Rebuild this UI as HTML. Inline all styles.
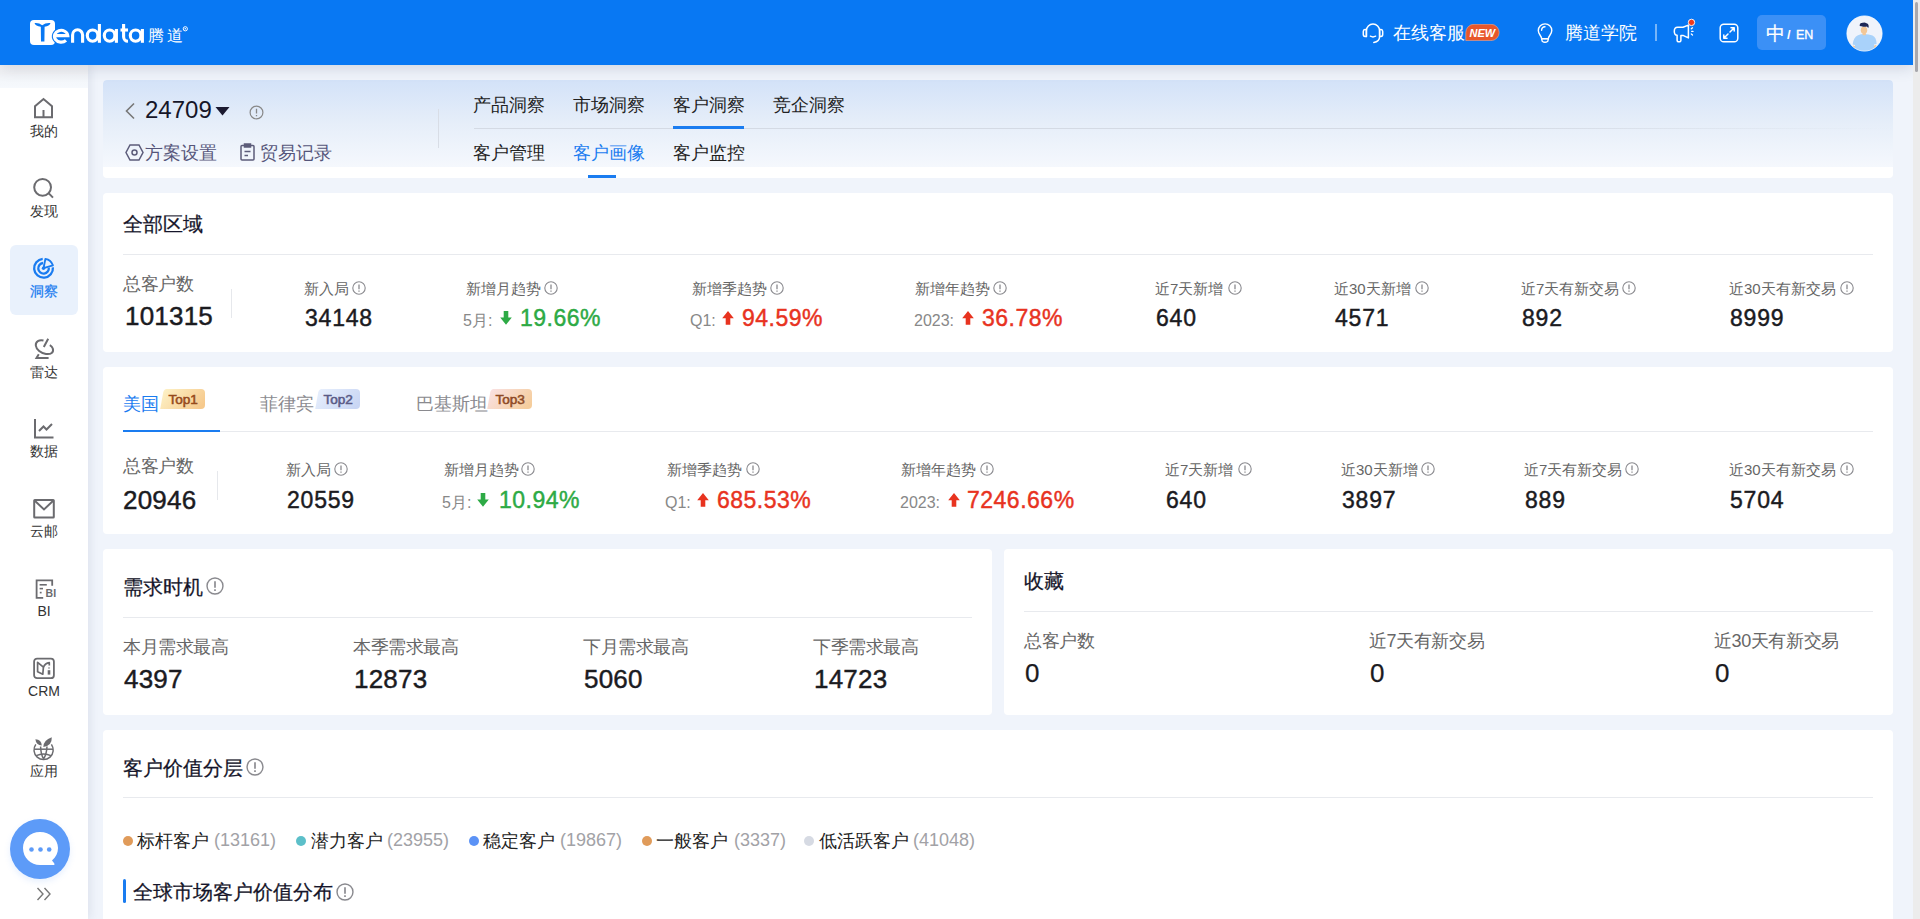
<!DOCTYPE html>
<html><head><meta charset="utf-8">
<style>
*{margin:0;padding:0;box-sizing:border-box}
html,body{width:1920px;height:919px;overflow:hidden;background:#f0f4fb;font-family:"Liberation Sans",sans-serif}
.a{position:absolute;white-space:nowrap;line-height:1}
#hdr{position:absolute;left:0;top:0;width:1913px;height:65px;background:#0878f3;box-shadow:0 3px 14px rgba(40,50,80,.16);z-index:5}
#sb{position:absolute;left:0;top:65px;width:88px;height:854px;background:#fff;box-shadow:3px 0 8px rgba(40,50,90,.08);z-index:4}
#scroll{position:absolute;left:1913px;top:0;width:7px;height:919px;background:#ececec;z-index:6}
#thumb{position:absolute;left:2px;top:2px;width:3px;height:70px;background:#a8a8ad;border-radius:2px}
.card{position:absolute;background:#fff;border-radius:4px}
.w{color:#fff}
.sbt{font-size:14px;color:#333;width:88px;text-align:center;left:0}
.ico{position:absolute}
.title{font-size:20px;color:#15152a;-webkit-text-stroke:0.25px #15152a}
.lbl{font-size:15px;color:#666}
.lbl18{font-size:18px;color:#666;letter-spacing:-0.4px}
.num{font-size:26px;color:#1b1b1f;-webkit-text-stroke:0.45px #1b1b1f;letter-spacing:0.2px}
.num24{font-size:23px;color:#1b1b1f;-webkit-text-stroke:0.45px #1b1b1f;letter-spacing:0.8px}
.hr{position:absolute;height:1px;background:#e8eaee}
.pre{font-size:16px;color:#888}
.grn{font-size:23px;color:#2daa45;-webkit-text-stroke:0.45px #2daa45;letter-spacing:0.5px}
.red{font-size:23px;color:#e8331f;-webkit-text-stroke:0.45px #e8331f;letter-spacing:0.5px}
</style></head><body>

<!-- HEADER -->
<div id="hdr">
  <svg class="ico" style="left:0;top:0" width="200" height="65" viewBox="0 0 200 65">
  <rect x="30" y="20" width="25" height="25" rx="4" fill="#fff"/>
  <path d="M34.5 23 Q39 22.5 42.2 25.2 Q45.6 22.5 50.5 23 Q49.5 26.2 44.6 26.8 L44.4 41.5 L41 41.5 L40.8 26.8 Q35.5 26.2 34.5 23Z" fill="#0878f3"/>
  <g fill="none" stroke="#fff" stroke-width="3.1" stroke-linecap="butt">
    <path d="M54.4 35.6 H67.8 A6.7 5.9 0 1 0 66 40.3" stroke="#0878f3" stroke-width="5.2"/><path d="M54.4 35.6 H67.8 A6.7 5.9 0 1 0 66 40.3"/>
    <path d="M72.6 42.8 V35 A5 5.2 0 0 1 82.6 35 V42.8"/>
    <ellipse cx="92.6" cy="35.6" rx="5.3" ry="5.6"/>
    <path d="M99.4 24 V42.8"/>
    <ellipse cx="109.6" cy="35.6" rx="5.3" ry="5.6"/>
    <path d="M116.4 29 V42.8"/>
    <path d="M123.6 24 V37 A4.5 4.5 0 0 0 128 41.3"/>
    <path d="M120.5 30 H128"/>
    <ellipse cx="135.6" cy="35.6" rx="5.3" ry="5.6"/>
    <path d="M142.4 29 V42.8"/>
  </g>
  <text x="147.5" y="41" font-family="Liberation Sans" font-size="15.5" fill="#fff">腾</text>
  <text x="166.5" y="41" font-family="Liberation Sans" font-size="15.5" fill="#fff">道</text>
  <circle cx="185.3" cy="28.8" r="2.1" fill="none" stroke="#fff" stroke-width="1"/><circle cx="185.3" cy="28.8" r=".8" fill="#fff"/>
</svg>

  <svg class="ico" style="left:1362px;top:23px" width="22" height="21" viewBox="0 0 22 21" fill="none" stroke="#fff" stroke-width="1.5" stroke-linecap="round"><path d="M4.4 13.4 V7.6 A6.6 6.6 0 0 1 17.6 7.6 V13.5 Q17.6 18.6 11.8 19.4"/><path d="M4.4 6.6 H3 Q1.3 6.8 1.3 8.6 V11.6 Q1.3 13.4 3 13.4 H4.4Z" stroke-linejoin="round"/><path d="M17.6 6.6 H19 Q20.7 6.8 20.7 8.6 V11.6 Q20.7 13.4 19 13.4 H17.6Z" stroke-linejoin="round"/><path d="M8.4 13.2 Q11 14.6 13.6 13.2"/></svg>
  <div class="a w" style="left:1393px;top:24px;font-size:18px">在线客服</div>
  <svg class="ico" style="left:1465px;top:24px" width="35" height="17" viewBox="0 0 35 17"><path d="M0.8 16.6 V8.5 A8.2 8.2 0 0 1 9 0.3 H26 A8.15 8.15 0 0 1 26 16.6 Z" fill="#e8572a" stroke="#f4a98f" stroke-width=".6"/><text x="17.3" y="12.6" font-family="Liberation Sans" font-weight="bold" font-style="italic" font-size="11" fill="#fff" text-anchor="middle">NEW</text></svg>
  <svg class="ico" style="left:1536px;top:23px" width="18" height="21" viewBox="0 0 18 21" fill="none" stroke="#fff" stroke-width="1.4" stroke-linejoin="round"><path d="M5.6 15.6 C5.6 12.8 2.3 11.4 2.3 7.6 A6.75 6.75 0 0 1 15.8 7.6 C15.8 11.4 12.4 12.8 12.4 15.6 Z"/><path d="M5.6 15.8 H12.4 L11.8 18.2 Q9 20.4 6.2 18.2Z"/><path d="M5.6 7.2 A3.6 3.6 0 0 1 9 3.7" stroke-linecap="round"/></svg>
  <div class="a w" style="left:1565px;top:24px;font-size:18px">腾道学院</div>
  <div class="a" style="left:1655px;top:24px;width:2px;height:17px;background:rgba(255,255,255,.45)"></div>
  <svg class="ico" style="left:1672px;top:16px" width="26" height="28" viewBox="0 -2 26 28" fill="none" stroke="#fff" stroke-width="1.5" stroke-linejoin="round"><path d="M2.3 13.2 Q2.3 9.2 5.6 9.2 H11 L16.4 7.1 V19.9 L11 17.4 H8.9 V22.2 Q8.9 23.8 7 23.8 Q5.1 23.8 5.1 22.2 V17.3 Q2.3 17.1 2.3 13.2Z"/><path d="M19.3 10.8 L20.5 9.8 M19.7 13.4 H21 M19.3 16 L20.5 17" stroke-width="1.3" stroke-linecap="round"/><circle cx="19.5" cy="4.4" r="3.2" fill="#f03a1c" stroke="#fff" stroke-width="0.9"/></svg>
  <svg class="ico" style="left:1719px;top:23px" width="20" height="20" viewBox="0 0 20 20" fill="none" stroke="#fff" stroke-width="1.5" stroke-linecap="round" stroke-linejoin="round"><rect x="1.2" y="1.2" width="17.6" height="17.6" rx="3.6"/><path d="M11 9 L15 5 M12 4.8 H15.2 V8 M9 11 L5 15 M4.8 12 V15.2 H8"/></svg>
  <div class="a" style="left:1757px;top:15px;width:69px;height:35px;background:#3b90f6;border-radius:5px"></div>
  <div class="a w" style="left:1766px;top:23.5px;font-size:19px;-webkit-text-stroke:0.2px #fff">中</div>
  <div class="a w" style="left:1787px;top:28px;font-size:13px;font-weight:bold">/</div><div class="a w" style="left:1796px;top:28.5px;font-size:12.5px;-webkit-text-stroke:0.35px #fff">EN</div>
  <svg class="ico" style="left:1846px;top:15px" width="37" height="37" viewBox="0 0 37 37"><circle cx="18.5" cy="18.5" r="17.6" fill="#eff3fb" stroke="#ffffff" stroke-width="0.8"/><clipPath id="cav"><circle cx="18.5" cy="18.5" r="17.2"/></clipPath><g clip-path="url(#cav)"><ellipse cx="7.6" cy="33.2" rx="2" ry="2.6" fill="#f3c796"/><ellipse cx="29.4" cy="32.6" rx="2" ry="2.6" fill="#f3c796"/><path d="M8.6 37 L9 30 L6.6 29.5 Q7.5 22 12 20.2 Q15 19 18 19 Q23 19 26.5 20.6 Q30.5 22.5 30.6 29 L28 29.6 L28.2 37Z" fill="#a9d2fa"/><rect x="16.6" y="16" width="3.2" height="4.2" fill="#f3c796"/><ellipse cx="18" cy="15.2" rx="3.2" ry="3.6" fill="#f3c796"/><path d="M13.5 10.2 Q14 7.6 17 7.8 Q18.5 7 20.5 8.2 Q23.2 9 22.6 12.6 Q21.6 13 21 11.6 Q18 12.2 15.5 11.2 Q14 11.6 13.5 10.2Z" fill="#1c2757"/></g></svg>
</div>
<div id="scroll"><div id="thumb"></div></div>

<!-- SIDEBAR -->
<div id="sb"></div><div style="position:absolute;left:0;top:65px;width:88px;height:23px;background:linear-gradient(180deg,#f3f4f6 0%,#f2f3f6 35%,#f3f6fa 60%,#f6f9fd 100%);z-index:4"></div>
<div style="position:absolute;left:0;top:0;z-index:7">
  <!-- 我的 -->
  <svg class="ico" style="left:33px;top:97px" width="22" height="22" viewBox="0 0 22 22" fill="none" stroke="#6b6b6f" stroke-width="2"><path d="M2 20.3 V9.2 L10.5 2 L19 9.2 V20.3 Z"/><path d="M10.5 13 V20.3"/></svg>
  <div class="a sbt" style="top:124px">我的</div>
  <!-- 发现 -->
  <svg class="ico" style="left:33px;top:177px" width="22" height="23" viewBox="0 0 22 23" fill="none" stroke="#6b6b6f" stroke-width="2"><circle cx="9.6" cy="10.3" r="8.4"/><path d="M15.8 16.4 L20 20.6"/></svg>
  <div class="a sbt" style="top:204px">发现</div>
  <!-- 洞察 active -->
  <div class="a" style="left:10px;top:245px;width:68px;height:70px;background:#e9f1fc;border-radius:6px"></div>
  <svg class="ico" style="left:32px;top:257px" width="23" height="23" viewBox="0 0 23 23" fill="none" stroke="#1a7cf0" stroke-width="2.3"><path d="M10.7 1.9 A9.4 9.4 0 1 0 20.9 10.4"/><path d="M11 6 A5.3 5.3 0 1 0 16.8 10.6"/><path d="M11.5 11.2 L13.4 1.9 A9.6 9.6 0 0 1 20.9 8.4 Z" stroke-width="1.9" stroke-linejoin="round"/><circle cx="11.5" cy="11.2" r="1.7" fill="#1a7cf0" stroke="none"/></svg>
  <div class="a sbt" style="top:284px;color:#1a7cf0;-webkit-text-stroke:0.25px #1a7cf0">洞察</div>
  <!-- 雷达 -->
  <svg class="ico" style="left:33px;top:337px" width="22" height="23" viewBox="0 0 22 23" fill="none" stroke="#6b6b6f" stroke-width="2"><path d="M10.5 3.6 C6 2.6 2.5 4.5 2.8 8.5 C3.2 12.5 8 16.5 13 17 C18 17.6 21 15.5 19.8 11.5 C19.3 10 18 8.8 16.8 8.2"/><path d="M15.2 1.8 L10.8 10"/><path d="M5.8 17.3 L3.5 21 H15.6"/></svg>
  <div class="a sbt" style="top:365px">雷达</div>
  <!-- 数据 -->
  <svg class="ico" style="left:33px;top:418px" width="22" height="21" viewBox="0 0 22 21" fill="none" stroke="#6b6b6f" stroke-width="2"><path d="M2 1 V19.5 H20.5"/><path d="M6 13 L10.5 8.5 L13.5 11.5 L19 6"/></svg>
  <div class="a sbt" style="top:444px">数据</div>
  <!-- 云邮 -->
  <svg class="ico" style="left:33px;top:498px" width="22" height="22" viewBox="0 0 22 22" fill="none" stroke="#6b6b6f" stroke-width="2"><rect x="1.2" y="2" width="19.6" height="17.6" rx="0.6"/><path d="M1.8 2.8 L11 11.4 L20.2 2.8"/></svg>
  <div class="a sbt" style="top:524px">云邮</div>
  <!-- BI -->
  <svg class="ico" style="left:33px;top:578px" width="24" height="22" viewBox="0 0 24 22" fill="none" stroke="#6b6b6f" stroke-width="1.8"><path d="M10.2 19.8 H3.6 V2.4 H19.2 V7.8"/><path d="M6.6 6.8 H13.8" stroke-width="1.6"/><path d="M6.6 10.6 H10" stroke-width="1.6"/><path d="M6.8 14.6 H8.6" stroke-width="1.6"/><text x="12.6" y="19.3" font-family="Liberation Sans" font-weight="bold" font-size="10.5" fill="#6b6b6f" stroke="none">BI</text></svg>
  <div class="a sbt" style="top:604px">BI</div>
  <!-- CRM -->
  <svg class="ico" style="left:33px;top:657px" width="23" height="23" viewBox="0 0 23 23" fill="none" stroke="#6b6b6f" stroke-width="1.8" stroke-linejoin="round"><rect x="1.1" y="1.6" width="19.8" height="19.6" rx="3"/><path d="M4.6 5.3 V14.8 L9.8 17.2 L10.4 10.2 Z" stroke-width="1.7"/><path d="M10.4 10.2 Q12.2 6.2 16.3 5.6 V8.4" stroke-width="1.7"/><path d="M15 10.6 H17 L16 12.2Z" fill="#6b6b6f" stroke="none"/><rect x="14.7" y="13.2" width="2.6" height="4.4" fill="#6b6b6f" stroke="none"/></svg>
  <div class="a sbt" style="top:684px">CRM</div>
  <!-- 应用 -->
  <svg class="ico" style="left:32px;top:736px" width="24" height="25" viewBox="0 0 24 25" fill="none" stroke="#6b6b6f" stroke-width="1.5"><path d="M3.8 8.4 A9.6 9.6 0 1 0 19.4 8.4"/><path d="M2 13.2 H21.2"/><path d="M4.2 19.6 Q11.6 16.2 19 19.6"/><path d="M8.6 10.5 Q8.8 18.5 11.6 22.8 M15 10.5 Q14.6 18.5 11.6 22.8"/><path d="M3.4 3.2 Q9.5 3.6 9.8 9.4 Q4 9.2 3.4 3.2Z" fill="#6b6b6f" stroke="none"/><path d="M19.8 1.2 Q20.2 9.6 11.3 11 Q11.4 4 19.8 1.2Z" fill="#6b6b6f" stroke="none"/></svg>
  <div class="a sbt" style="top:764px">应用</div>
  <!-- chat -->
  <div class="a" style="left:10px;top:819px;width:60px;height:60px;border-radius:50%;background:#5d9bf8;box-shadow:0 3px 6px rgba(93,155,248,.15)"></div>
  <svg class="ico" style="left:22px;top:831px" width="37" height="36" viewBox="0 0 37 36"><path d="M18 1 C8 1 1 8 1 17 C1 27 9 34 18 34 H31 Q33.5 34 32 32 L30 29.5 C34 26 36 22 36 17 C36 8 28 1 18 1Z" fill="#fff"/><circle cx="9.5" cy="18.5" r="2.3" fill="#5d9bf8"/><circle cx="18.5" cy="18.5" r="2.3" fill="#5d9bf8"/><circle cx="27.2" cy="18.5" r="2.3" fill="#5d9bf8"/></svg>
  <svg class="ico" style="left:36px;top:887px" width="16" height="14" viewBox="0 0 16 14" fill="none" stroke="#777" stroke-width="1.4"><path d="M1.5 1 L7 7 L1.5 13 M8.5 1 L14 7 L8.5 13"/></svg>
</div>

<!-- CARD 1 nav -->
<div class="card" style="left:103px;top:80px;width:1790px;height:98px;overflow:hidden">
  <div style="position:absolute;left:0;top:0;width:100%;height:87px;background:linear-gradient(180deg,#d3e2f8 0%,#e6eef9 50%,#f5f8fd 100%)"></div>
</div>
<svg class="ico" style="left:124px;top:102px" width="12" height="18" viewBox="0 0 12 18" fill="none" stroke="#777" stroke-width="1.6"><path d="M10 1.5 L2.5 9 L10 16.5"/></svg>
<div class="a" style="left:145px;top:98px;font-size:24px;color:#161628">24709</div>
<svg class="ico" style="left:215px;top:106px" width="15" height="10" viewBox="0 0 15 10"><path d="M0.5 1 H14.5 L7.5 9.5Z" fill="#1c1a30"/></svg>
<svg class="ico" style="left:249px;top:105px" width="15" height="15" viewBox="0 0 15 15" fill="none" stroke="#888" stroke-width="1.2"><circle cx="7.5" cy="7.5" r="6.4"/><path d="M7.5 3.8 V8.5 M7.5 10 V11.2" stroke-width="1.3"/></svg>
<svg class="ico" style="left:125px;top:144px" width="19" height="17" viewBox="0 0 19 17" fill="none" stroke="#5c5c7a" stroke-width="1.5"><path d="M5 1 H14 L18 8.5 L14 16 H5 L1 8.5Z"/><circle cx="9.5" cy="8.5" r="2.5"/></svg>
<div class="a" style="left:145px;top:144px;font-size:18px;color:#55557a">方案设置</div>
<svg class="ico" style="left:240px;top:143px" width="15" height="18" viewBox="0 0 15 18" fill="none" stroke="#5c5c7a" stroke-width="1.5"><rect x="1" y="2.5" width="13" height="14.5" rx="1"/><rect x="4.5" y="1" width="6" height="3" fill="#5c5c7a"/><path d="M4.5 8.5 H10.5 M4.5 12.5 H8"/></svg>
<div class="a" style="left:260px;top:144px;font-size:18px;color:#55557a">贸易记录</div>
<div class="a" style="left:438px;top:109px;width:1px;height:39px;background:#d8dde6"></div>
<div class="a" style="left:473px;top:96px;font-size:18px;color:#222">产品洞察</div>
<div class="a" style="left:573px;top:96px;font-size:18px;color:#222">市场洞察</div>
<div class="a" style="left:673px;top:96px;font-size:18px;color:#222">客户洞察</div>
<div class="a" style="left:773px;top:96px;font-size:18px;color:#222">竞企洞察</div>
<div class="a" style="left:474px;top:128px;width:1419px;height:1px;background:linear-gradient(90deg,#d4dae4 0%,#d4dae4 72%,rgba(212,218,228,0) 100%)"></div>
<div class="a" style="left:673px;top:126px;width:71px;height:3px;background:#1a7cf0"></div>
<div class="a" style="left:473px;top:144px;font-size:18px;color:#222">客户管理</div>
<div class="a" style="left:573px;top:144px;font-size:18px;color:#1a7cf0">客户画像</div>
<div class="a" style="left:673px;top:144px;font-size:18px;color:#222">客户监控</div>
<div class="a" style="left:588px;top:175px;width:28px;height:3px;background:#1a7cf0"></div>

<!-- CARD 2 全部区域 -->
<div class="card" style="left:103px;top:193px;width:1790px;height:159px"></div>
<div class="a title" style="left:123px;top:214px">全部区域</div>
<div class="hr" style="left:123px;top:254px;width:1750px"></div>

<!-- CARD 3 country -->
<div class="card" style="left:103px;top:367px;width:1790px;height:167px"></div>

<!-- CARD 4 需求时机 -->
<div class="card" style="left:103px;top:549px;width:889px;height:166px"></div>
<div class="a title" style="left:123px;top:577px">需求时机</div>
<div class="hr" style="left:123px;top:617px;width:849px"></div>

<!-- CARD 5 收藏 -->
<div class="card" style="left:1004px;top:549px;width:889px;height:166px"></div>
<div class="a title" style="left:1024px;top:571px">收藏</div>
<div class="hr" style="left:1024px;top:611px;width:849px"></div>

<!-- CARD 6 -->
<div class="card" style="left:103px;top:730px;width:1790px;height:200px"></div>
<div class="a title" style="left:123px;top:758px">客户价值分层</div>
<div class="hr" style="left:123px;top:797px;width:1750px"></div>

<!--CONTENT-->
<div class="a lbl18" style="left:123px;top:275px;">总客户数</div>
<div class="a num" style="left:125px;top:303px;">101315</div>
<div class="a" style="left:231px;top:289px;width:1px;height:29px;background:#e6e8ec"></div>
<div class="a lbl" style="left:304px;top:281px;">新入局</div>
<svg class="ico" style="left:352px;top:280.5px" width="14" height="14" viewBox="0 0 14 14" fill="none" stroke="#8a8a8f" stroke-width="1.1"><circle cx="7" cy="7" r="6.2"/><path d="M7 3.4 V8.3 M7 9.6 V10.8" stroke-width="1.3"/></svg>
<div class="a num24" style="left:305px;top:307px;">34148</div>
<div class="a lbl" style="left:466px;top:281px;">新增月趋势</div>
<svg class="ico" style="left:544px;top:280.5px" width="14" height="14" viewBox="0 0 14 14" fill="none" stroke="#8a8a8f" stroke-width="1.1"><circle cx="7" cy="7" r="6.2"/><path d="M7 3.4 V8.3 M7 9.6 V10.8" stroke-width="1.3"/></svg>
<div class="a pre" style="left:463px;top:313px;">5月:</div>
<svg class="ico" style="left:500px;top:311px" width="12" height="14" viewBox="0 0 12 14"><path d="M6 13.8 L11.8 6.6 H8.3 V0 H3.7 V6.6 H0.2Z" fill="#2daa45"/></svg>
<div class="a grn" style="left:520px;top:307px;">19.66%</div>
<div class="a lbl" style="left:692px;top:281px;">新增季趋势</div>
<svg class="ico" style="left:770px;top:280.5px" width="14" height="14" viewBox="0 0 14 14" fill="none" stroke="#8a8a8f" stroke-width="1.1"><circle cx="7" cy="7" r="6.2"/><path d="M7 3.4 V8.3 M7 9.6 V10.8" stroke-width="1.3"/></svg>
<div class="a pre" style="left:690px;top:313px;">Q1:</div>
<svg class="ico" style="left:722px;top:311px" width="12" height="14" viewBox="0 0 12 14"><path d="M6 0 L11.8 7.2 H8.3 V13.8 H3.7 V7.2 H0.2Z" fill="#e8331f"/></svg>
<div class="a red" style="left:742px;top:307px;">94.59%</div>
<div class="a lbl" style="left:915px;top:281px;">新增年趋势</div>
<svg class="ico" style="left:993px;top:280.5px" width="14" height="14" viewBox="0 0 14 14" fill="none" stroke="#8a8a8f" stroke-width="1.1"><circle cx="7" cy="7" r="6.2"/><path d="M7 3.4 V8.3 M7 9.6 V10.8" stroke-width="1.3"/></svg>
<div class="a pre" style="left:914px;top:313px;">2023:</div>
<svg class="ico" style="left:962px;top:311px" width="12" height="14" viewBox="0 0 12 14"><path d="M6 0 L11.8 7.2 H8.3 V13.8 H3.7 V7.2 H0.2Z" fill="#e8331f"/></svg>
<div class="a red" style="left:982px;top:307px;">36.78%</div>
<div class="a lbl" style="left:1155px;top:281px;">近7天新增</div>
<svg class="ico" style="left:1228px;top:280.5px" width="14" height="14" viewBox="0 0 14 14" fill="none" stroke="#8a8a8f" stroke-width="1.1"><circle cx="7" cy="7" r="6.2"/><path d="M7 3.4 V8.3 M7 9.6 V10.8" stroke-width="1.3"/></svg>
<div class="a num24" style="left:1156px;top:307px;">640</div>
<div class="a lbl" style="left:1334px;top:281px;">近30天新增</div>
<svg class="ico" style="left:1415px;top:280.5px" width="14" height="14" viewBox="0 0 14 14" fill="none" stroke="#8a8a8f" stroke-width="1.1"><circle cx="7" cy="7" r="6.2"/><path d="M7 3.4 V8.3 M7 9.6 V10.8" stroke-width="1.3"/></svg>
<div class="a num24" style="left:1335px;top:307px;">4571</div>
<div class="a lbl" style="left:1521px;top:281px;">近7天有新交易</div>
<svg class="ico" style="left:1622px;top:280.5px" width="14" height="14" viewBox="0 0 14 14" fill="none" stroke="#8a8a8f" stroke-width="1.1"><circle cx="7" cy="7" r="6.2"/><path d="M7 3.4 V8.3 M7 9.6 V10.8" stroke-width="1.3"/></svg>
<div class="a num24" style="left:1522px;top:307px;">892</div>
<div class="a lbl" style="left:1729px;top:281px;">近30天有新交易</div>
<svg class="ico" style="left:1840px;top:280.5px" width="14" height="14" viewBox="0 0 14 14" fill="none" stroke="#8a8a8f" stroke-width="1.1"><circle cx="7" cy="7" r="6.2"/><path d="M7 3.4 V8.3 M7 9.6 V10.8" stroke-width="1.3"/></svg>
<div class="a num24" style="left:1730px;top:307px;">8999</div>
<div class="a " style="left:123px;top:395px;font-size:18px;color:#1a7cf0">美国</div>
<div class="a " style="left:260px;top:395px;font-size:18px;color:#8a8a8f">菲律宾</div>
<div class="a " style="left:416px;top:395px;font-size:18px;color:#8a8a8f">巴基斯坦</div>
<svg class="ico" style="left:160px;top:388px" width="46" height="22" viewBox="0 0 46 22"><defs><linearGradient id="gTop1" x1="0" x2="1" y1="0.3" y2="0.7"><stop offset="0" stop-color="#fdf0c4"/><stop offset="1" stop-color="#f6c98c"/></linearGradient></defs><path d="M6.5 1 H41 a4 4 0 0 1 4 4 V17 a4 4 0 0 1 -4 4 H0.2 L3.2 4.5 Q4 1 6.5 1Z" fill="url(#gTop1)"/><text x="23.2" y="15.7" font-family="Liberation Sans" font-size="13.6" fill="#964a1c" stroke="#964a1c" stroke-width="0.55" text-anchor="middle">Top1</text></svg>
<svg class="ico" style="left:315px;top:388px" width="46" height="22" viewBox="0 0 46 22"><defs><linearGradient id="gTop2" x1="0" x2="1" y1="0.3" y2="0.7"><stop offset="0" stop-color="#e6eefc"/><stop offset="1" stop-color="#c9d6f4"/></linearGradient></defs><path d="M6.5 1 H41 a4 4 0 0 1 4 4 V17 a4 4 0 0 1 -4 4 H0.2 L3.2 4.5 Q4 1 6.5 1Z" fill="url(#gTop2)"/><text x="23.2" y="15.7" font-family="Liberation Sans" font-size="13.6" fill="#5a5a86" stroke="#5a5a86" stroke-width="0.55" text-anchor="middle">Top2</text></svg>
<svg class="ico" style="left:487px;top:388px" width="46" height="22" viewBox="0 0 46 22"><defs><linearGradient id="gTop3" x1="0" x2="1" y1="0.3" y2="0.7"><stop offset="0" stop-color="#f9e0e0"/><stop offset="1" stop-color="#f5cd9c"/></linearGradient></defs><path d="M6.5 1 H41 a4 4 0 0 1 4 4 V17 a4 4 0 0 1 -4 4 H0.2 L3.2 4.5 Q4 1 6.5 1Z" fill="url(#gTop3)"/><text x="23.2" y="15.7" font-family="Liberation Sans" font-size="13.6" fill="#8e4a26" stroke="#8e4a26" stroke-width="0.55" text-anchor="middle">Top3</text></svg>
<div class="a" style="left:123px;top:431px;width:1750px;height:1px;background:#e8eaee"></div>
<div class="a" style="left:123px;top:430px;width:97px;height:2px;background:#1a7cf0"></div>
<div class="a lbl18" style="left:123px;top:457px;">总客户数</div>
<div class="a num" style="left:123px;top:487px;">20946</div>
<div class="a" style="left:217px;top:471px;width:1px;height:29px;background:#e6e8ec"></div>
<div class="a lbl" style="left:286px;top:462px;">新入局</div>
<svg class="ico" style="left:334px;top:461.5px" width="14" height="14" viewBox="0 0 14 14" fill="none" stroke="#8a8a8f" stroke-width="1.1"><circle cx="7" cy="7" r="6.2"/><path d="M7 3.4 V8.3 M7 9.6 V10.8" stroke-width="1.3"/></svg>
<div class="a num24" style="left:287px;top:489px;">20559</div>
<div class="a lbl" style="left:444px;top:462px;">新增月趋势</div>
<svg class="ico" style="left:521px;top:461.5px" width="14" height="14" viewBox="0 0 14 14" fill="none" stroke="#8a8a8f" stroke-width="1.1"><circle cx="7" cy="7" r="6.2"/><path d="M7 3.4 V8.3 M7 9.6 V10.8" stroke-width="1.3"/></svg>
<div class="a pre" style="left:442px;top:495px;">5月:</div>
<svg class="ico" style="left:477px;top:493px" width="12" height="14" viewBox="0 0 12 14"><path d="M6 13.8 L11.8 6.6 H8.3 V0 H3.7 V6.6 H0.2Z" fill="#2daa45"/></svg>
<div class="a grn" style="left:499px;top:489px;">10.94%</div>
<div class="a lbl" style="left:667px;top:462px;">新增季趋势</div>
<svg class="ico" style="left:746px;top:461.5px" width="14" height="14" viewBox="0 0 14 14" fill="none" stroke="#8a8a8f" stroke-width="1.1"><circle cx="7" cy="7" r="6.2"/><path d="M7 3.4 V8.3 M7 9.6 V10.8" stroke-width="1.3"/></svg>
<div class="a pre" style="left:665px;top:495px;">Q1:</div>
<svg class="ico" style="left:697px;top:493px" width="12" height="14" viewBox="0 0 12 14"><path d="M6 0 L11.8 7.2 H8.3 V13.8 H3.7 V7.2 H0.2Z" fill="#e8331f"/></svg>
<div class="a red" style="left:717px;top:489px;">685.53%</div>
<div class="a lbl" style="left:901px;top:462px;">新增年趋势</div>
<svg class="ico" style="left:980px;top:461.5px" width="14" height="14" viewBox="0 0 14 14" fill="none" stroke="#8a8a8f" stroke-width="1.1"><circle cx="7" cy="7" r="6.2"/><path d="M7 3.4 V8.3 M7 9.6 V10.8" stroke-width="1.3"/></svg>
<div class="a pre" style="left:900px;top:495px;">2023:</div>
<svg class="ico" style="left:948px;top:493px" width="12" height="14" viewBox="0 0 12 14"><path d="M6 0 L11.8 7.2 H8.3 V13.8 H3.7 V7.2 H0.2Z" fill="#e8331f"/></svg>
<div class="a red" style="left:967px;top:489px;">7246.66%</div>
<div class="a lbl" style="left:1165px;top:462px;">近7天新增</div>
<svg class="ico" style="left:1238px;top:461.5px" width="14" height="14" viewBox="0 0 14 14" fill="none" stroke="#8a8a8f" stroke-width="1.1"><circle cx="7" cy="7" r="6.2"/><path d="M7 3.4 V8.3 M7 9.6 V10.8" stroke-width="1.3"/></svg>
<div class="a num24" style="left:1166px;top:489px;">640</div>
<div class="a lbl" style="left:1341px;top:462px;">近30天新增</div>
<svg class="ico" style="left:1421px;top:461.5px" width="14" height="14" viewBox="0 0 14 14" fill="none" stroke="#8a8a8f" stroke-width="1.1"><circle cx="7" cy="7" r="6.2"/><path d="M7 3.4 V8.3 M7 9.6 V10.8" stroke-width="1.3"/></svg>
<div class="a num24" style="left:1342px;top:489px;">3897</div>
<div class="a lbl" style="left:1524px;top:462px;">近7天有新交易</div>
<svg class="ico" style="left:1625px;top:461.5px" width="14" height="14" viewBox="0 0 14 14" fill="none" stroke="#8a8a8f" stroke-width="1.1"><circle cx="7" cy="7" r="6.2"/><path d="M7 3.4 V8.3 M7 9.6 V10.8" stroke-width="1.3"/></svg>
<div class="a num24" style="left:1525px;top:489px;">889</div>
<div class="a lbl" style="left:1729px;top:462px;">近30天有新交易</div>
<svg class="ico" style="left:1840px;top:461.5px" width="14" height="14" viewBox="0 0 14 14" fill="none" stroke="#8a8a8f" stroke-width="1.1"><circle cx="7" cy="7" r="6.2"/><path d="M7 3.4 V8.3 M7 9.6 V10.8" stroke-width="1.3"/></svg>
<div class="a num24" style="left:1730px;top:489px;">5704</div>
<svg class="ico" style="left:206px;top:577px" width="18" height="18" viewBox="0 0 14 14" fill="none" stroke="#8a8a8f" stroke-width="1.1"><circle cx="7" cy="7" r="6.2"/><path d="M7 3.4 V8.3 M7 9.6 V10.8" stroke-width="1.3"/></svg>
<div class="a lbl18" style="left:123px;top:638px;">本月需求最高</div>
<div class="a num" style="left:124px;top:666px;">4397</div>
<div class="a lbl18" style="left:353px;top:638px;">本季需求最高</div>
<div class="a num" style="left:354px;top:666px;">12873</div>
<div class="a lbl18" style="left:583px;top:638px;">下月需求最高</div>
<div class="a num" style="left:584px;top:666px;">5060</div>
<div class="a lbl18" style="left:813px;top:638px;">下季需求最高</div>
<div class="a num" style="left:814px;top:666px;">14723</div>
<div class="a lbl18" style="left:1024px;top:632px;">总客户数</div>
<div class="a " style="left:1025px;top:660px;font-size:26px;color:#1b1b1f;-webkit-text-stroke:0.25px #1b1b1f">0</div>
<div class="a lbl18" style="left:1369px;top:632px;">近7天有新交易</div>
<div class="a " style="left:1370px;top:660px;font-size:26px;color:#1b1b1f;-webkit-text-stroke:0.25px #1b1b1f">0</div>
<div class="a lbl18" style="left:1714px;top:632px;">近30天有新交易</div>
<div class="a " style="left:1715px;top:660px;font-size:26px;color:#1b1b1f;-webkit-text-stroke:0.25px #1b1b1f">0</div>
<svg class="ico" style="left:246px;top:758px" width="18" height="18" viewBox="0 0 14 14" fill="none" stroke="#8a8a8f" stroke-width="1.1"><circle cx="7" cy="7" r="6.2"/><path d="M7 3.4 V8.3 M7 9.6 V10.8" stroke-width="1.3"/></svg>
<div class="a" style="left:123px;top:836px;width:10px;height:10px;border-radius:50%;background:#e09b5a"></div>
<div class="a " style="left:137px;top:832px;font-size:18px;color:#222">标杆客户</div>
<div class="a " style="left:214px;top:831px;font-size:18px;color:#a2a2a6">(13161)</div>
<div class="a" style="left:296px;top:836px;width:10px;height:10px;border-radius:50%;background:#5cbfc9"></div>
<div class="a " style="left:311px;top:832px;font-size:18px;color:#222">潜力客户</div>
<div class="a " style="left:387px;top:831px;font-size:18px;color:#a2a2a6">(23955)</div>
<div class="a" style="left:469px;top:836px;width:10px;height:10px;border-radius:50%;background:#5b92f6"></div>
<div class="a " style="left:483px;top:832px;font-size:18px;color:#222">稳定客户</div>
<div class="a " style="left:560px;top:831px;font-size:18px;color:#a2a2a6">(19867)</div>
<div class="a" style="left:642px;top:836px;width:10px;height:10px;border-radius:50%;background:#e09b5a"></div>
<div class="a " style="left:656px;top:832px;font-size:18px;color:#222">一般客户</div>
<div class="a " style="left:734px;top:831px;font-size:18px;color:#a2a2a6">(3337)</div>
<div class="a" style="left:804px;top:836px;width:10px;height:10px;border-radius:50%;background:#d6dae3"></div>
<div class="a " style="left:819px;top:832px;font-size:18px;color:#222">低活跃客户</div>
<div class="a " style="left:913px;top:831px;font-size:18px;color:#a2a2a6">(41048)</div>
<div class="a" style="left:123px;top:879px;width:3px;height:24px;background:#1a7cf0;border-radius:1.5px"></div>
<div class="a title" style="left:133px;top:882px;">全球市场客户价值分布</div>
<svg class="ico" style="left:336px;top:883px" width="18" height="18" viewBox="0 0 14 14" fill="none" stroke="#8a8a8f" stroke-width="1.1"><circle cx="7" cy="7" r="6.2"/><path d="M7 3.4 V8.3 M7 9.6 V10.8" stroke-width="1.3"/></svg>
<!--/CONTENT-->
</body></html>
